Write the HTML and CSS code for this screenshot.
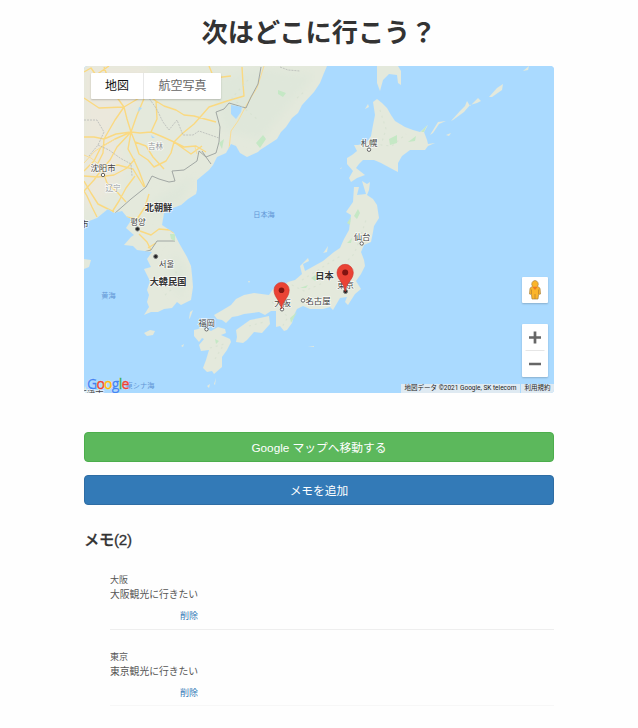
FILE: index.html
```html
<!DOCTYPE html>
<html lang="ja">
<head>
<meta charset="utf-8">
<title>次はどこに行こう？</title>
<link rel="stylesheet" href="styles.css">
</head>
<body>
<main class="container">
<h1 class="title">次はどこに行こう？</h1>
<section class="map">
<svg class="map-canvas" viewBox="84 66.5 470 326" role="img" aria-label="地図">
<defs>
<filter id="soft"><feGaussianBlur stdDeviation=".35"/></filter>
<filter id="terrain" x="0" y="0" width="100%" height="100%"><feGaussianBlur stdDeviation="4"/></filter>
<clipPath id="continent"><path d="M84 66H327L324 73L320 83L314 92L302 105L298 113L292 118L286 127L281 132L277 139L260 150L258 152L247 157L240 153L236 146L231 144L226 153L217 157L213 165L209 170L203 175L197 180V190L196 194L188 199L181 205L170 209L164 213L163 219L162 225L168 229L174 233L179 243L187 257L191 266L192 275L193 287L191 300L181 305L177 302L172 308L164 309L158 312L151 312L144 315L149 307L147 302L149 295L147 290L150 281L144 269L151 267L147 259L152 252L137 250L133 246L124 245L131 237L134 235L126 228L132 219L127 217L122 211L114 213L108 209L97 218L84 223Z"/></clipPath>
</defs>
<rect class="sea" x="84" y="66" width="470" height="327"/>
<g filter="url(#soft)">
<g clip-path="url(#continent)">
<rect class="land" x="84" y="66" width="246" height="252"/>
<g filter="url(#terrain)"><path class="plain" d="M84 66H150L140 100L110 128L126 163L115 188L84 213Z"/><path class="hill" d="M210 80L260 68L315 75L260 140L223 130ZM151 202L195 174L183 201L156 216ZM172 253L187 268L182 300L170 282Z"/></g>
<path class="road" d="M174 142L183 133L194 124L202 115L209 107L227 101L244 96L243 84L242 67M131 132L127 119L124 107L113 92L104 67M131 132L137 115L146 94L156 101L164 106L176 110L184 115L194 116L205 119L216 122M131 132L140 133L151 132L163 137L174 142L184 147L196 146L206 152M151 132L157 119L156 101M174 142L171 153L166 161L154 167L148 160L139 154L135 142L131 132M84 171L94 161L101 147L115 139L131 132M84 137L94 137L104 139L116 134L131 132M124 107L115 120L104 139L103 153L98 163M84 98L99 108L124 107L146 94M84 191L94 180L102 169L110 160L117 147L131 132M102 167L118 165L133 169L144 187M102 169L107 183L118 193L126 202M84 176L98 177L114 175L127 168L135 159M84 181L91 193L98 204L114 212M131 132L128 149L134 160L139 171L145 187M97 217L92 207L87 196L84 191M112 212L119 201L126 188L135 176M135 142L146 146L153 157L164 169M174 142L191 154L202 146M84 72L91 68L96 75L109 66M209 66L214 78L231 76M119 212L126 217L137 219L145 207L149 194M140 231L151 235L159 229L170 230L174 233M139 234L147 242L151 250M156 243L148 248"/>
<path class="minor-road" d="M264 66L257 88L247 104L238 121L231 131L229 149M197 154L195 147M84 163L95 151L115 139M102 167L91 158L84 155"/>
<path class="border" d="M261 67L258 84L251 97L246 108L229 103L224 109L216 112L220 127L219 142L216 153L206 157L199 151L197 161L184 170L172 171L175 181L169 182L159 179L152 176L146 187L131 199L114 214M202 151L206 157L211 164M175 241H157L151 250L136 254"/>
<path class="province" d="M84 120L97 120L104 132L98 145L89 156M146 94L156 108L163 122L169 130L177 120L183 135L193 135L199 131L219 138M98 145L109 150L120 158L131 164L132 176M280 67L288 70L300 71"/>
<path class="park" d="M278 90L286 93L283 97L278 94ZM256 143L263 135L266 139L260 148ZM170 234L175 234V241L171 239ZM219 143L224 139L222 149Z"/>
<path class="sea" d="M231 105L242 107L241 112L236 119L231 114ZM138 112L142 108L139 107ZM151 135L155 138L152 138Z"/>
</g>
<path class="land" d="M377 99L382 103L387 108L391 115L395 121L405 127L413 130L420 132L428 125L424 132L427 140L428 144L435 143L428 146L425 150L410 150L402 156L398 163V172L394 170L381 163L374 160L363 160L359 164L356 168L365 175L357 178L351 182L349 178L353 171L347 164V158L352 155L357 151L354 145L358 145L366 143L371 136L373 125L375 115L373 102Z"/>
<path class="land" d="M362 181L367 184L370 182L369 190L367 195L373 199L377 205L379 218L374 226L373 232L371 242L364 245L361 252L364 260L365 266L361 274L356 281L361 289L355 294L348 305L345 302L347 297L340 298L333 310L330 307L323 309L310 309L303 306L297 309L294 315L292 323L287 330L284 331L280 326L276 327V317L276 311L271 311L265 315L259 312L244 314L238 316L232 317L226 323L222 320L217 319L214 315L221 311L231 305L236 299L244 295L254 293L269 295L273 289L281 287L288 282L295 280L302 274L300 266L308 258L309 261L303 264L305 271L314 266L323 261L334 252L340 248L344 239L349 230L351 215L346 212L353 202L354 187L359 187L357 195L366 194Z"/>
<path class="land" d="M194 330L198 329L202 327L211 331L218 327L225 329L226 333L221 335L230 339L231 342L227 350L222 357L222 367L214 374L212 371L207 372L203 368L206 360L209 350L201 351L199 345L204 339L202 338L199 342L194 336ZM236 330L243 325L250 320L260 318L269 316L270 324L262 333L254 332L247 340L243 343L236 342L237 337Z"/>
<path class="land" d="M377 66H398L401 71V85L398 83L397 75L389 74L383 80L380 91L377 83ZM430 135L438 122L446 121L439 124L433 133ZM451 121L460 111L465 106L467 101L470 106L478 98L481 101L477 103L470 105L464 112L453 120ZM489 97L497 88L503 84L502 90L492 97ZM446 135L451 133L449 136ZM523 71L529 66L528 70ZM144 333L150 330L155 331L153 335L147 336ZM189 319L190 312L193 310L190 318ZM181 346L184 344L183 347ZM207 386L210 384L209 388ZM214 384L216 378L215 385ZM324 252L328 246L327 252L323 253ZM84 259L91 260L89 267L84 269ZM365 109L368 104L369 107ZM340 169L342 167L341 169ZM248 281L250 281L249 283ZM84 391L85 386L88 393ZM308 347L314 346L314 347Z"/>
<path class="park" d="M389 139L397 135V143L390 145ZM408 142L416 136L415 141ZM347 243L352 238L351 243ZM354 216L358 209L360 213L357 219ZM311 278L320 272L322 276L315 281ZM300 288L308 285L306 288ZM290 318L297 312L291 323ZM215 339L219 341L216 344ZM347 223L351 217L350 225ZM421 132L427 125L424 132Z"/>
<path class="relief" d="M348 260L354 254L358 244L366 220M302 280L326 265L342 255M281 290L292 285L304 291L323 283M272 302L288 317L282 327M249 326L264 322M210 348L224 344L215 359M380 110L386 129L381 145L392 146L406 134M297 98L305 91M248 80L232 98L257 119M165 295L181 281L173 267"/>
</g>
<g class="places">
<text x="155.5" y="149" class="province-name">吉林</text><text x="113" y="191" class="province-name">辽宁</text>
<text x="103" y="171" class="city">沈阳市</text><circle class="dot" cx="103" cy="175" r="1.7"/>
<text x="84.5" y="227" class="city">市</text>
<text x="158.5" y="210.5" class="country">北朝鮮</text><text x="138" y="224.5" class="city">평양</text><circle class="capital" cx="137.5" cy="229" r="2"/>
<text x="166.5" y="266.5" class="city">서울</text><circle class="capital" cx="155.7" cy="256.5" r="2"/>
<text x="168" y="285" class="country">大韓民国</text>
<text x="264" y="217" class="water">日本海</text><text x="108.5" y="297.5" class="water">黄海</text><text x="140" y="387.7" class="water">東シナ海</text>
<text x="369" y="145.5" class="city">札幌</text><circle class="dot" cx="369" cy="149.7" r="1.7"/>
<text x="362" y="240" class="city">仙台</text><circle class="dot" cx="361.7" cy="243.5" r="1.7"/>
<text x="206.5" y="325.5" class="city">福岡</text><circle class="dot" cx="206.5" cy="329.3" r="1.7"/>
<text x="318" y="304" class="city">名古屋</text><circle class="dot" cx="303" cy="300.5" r="1.7"/>
<text x="324.5" y="279" class="country">日本</text>
<text x="345.5" y="287.5" class="city">東京</text><circle class="capital" cx="345.5" cy="291.5" r="2"/>
<text x="282.5" y="305.7" class="city">大阪</text><circle class="dot" cx="282" cy="309.3" r="1.7"/>
<text x="91" y="397" class="city">天津市</text>
</g>
<g class="pins"><path d="M281.5 309C280.5 300 274 298 274 290A7.6 7.6 0 0 1 289.2 290C289.2 298 282.5 300 281.5 309Z"/><circle cx="281.5" cy="290.3" r="2.8"/><path d="M345.2 291.5C344 282 337 280 337 272.5A8.1 8.1 0 0 1 353.3 272.5C353.3 280 346.3 282 345.2 291.5Z"/><circle cx="345.2" cy="272.5" r="3"/></g>
</svg>
<div class="map-types"><span class="active">地図</span><span>航空写真</span></div>
<div class="controls">
<div class="person"><svg viewBox="0 0 14 20"><path d="M7 .5A3.6 3.6 0 0 1 9.5 6.3L12 8.2L12.5 14L10.6 14.4L10 19H4L3.4 14.4L1.5 14L2 8.2L4.5 6.3A3.6 3.6 0 0 1 7 .5Z" fill="#fbb52a" stroke="#a98443" stroke-width=".7"/><path d="M4.3 6.7H9.7L7 10Z" fill="#ed7b23"/><path d="M7 14V19M3.5 9.5V14M10.5 9.5V14" stroke="#b7802e" stroke-width=".7"/></svg></div>
<div class="zoom"><svg viewBox="0 0 26 53"><path d="M7 13.5H19M13 7.5V19.5M7 40H19" stroke="#666" stroke-width="2.7"/><path d="M3.5 26.5H22.5" stroke="#e6e6e6"/></svg></div>
</div>
<div class="logo"><span class="b">G</span><span class="r">o</span><span class="y">o</span><span class="b">g</span><span class="g">l</span><span class="r">e</span></div>
<div class="attribution"><span>地図データ ©2021 Google, SK telecom</span><span>利用規約</span></div>
</section>
<button class="button success">Google マップへ移動する</button>
<button class="button primary">メモを追加</button>
<h2 class="memo-heading">メモ(2)</h2>
<ul class="memos">
<li class="memo"><div class="place">大阪</div><div class="description">大阪観光に行きたい</div><a class="delete">削除</a></li>
<li class="memo"><div class="place">東京</div><div class="description">東京観光に行きたい</div><a class="delete">削除</a></li>
</ul>
</main>
</body>
</html>
```
FILE: styles.css
```css
* { box-sizing: border-box; }
body { margin: 0; background: #fefefe; color: #333; font-family: "Liberation Sans", "Noto Sans CJK JP", sans-serif; }
.container { width: 470px; margin-left: 84px; }
.title { margin: 0; height: 66px; padding-top: 13px; font-size: 26.2px; line-height: 40px; font-weight: 700; text-align: center; }
.map { position: relative; height: 327px; border-radius: 4px; overflow: hidden; background: #aadaff; }
.map-canvas { display: block; width: 470px; height: 327px; }
.sea { fill: #aadaff; }
.land { fill: #e4e9dc; }
.plain { fill: #ebe8dc; }
.hill { fill: #dfe7da; }
.park { fill: #c5e8c5; }
.road, .minor-road, .border, .province, .relief { fill: none; stroke-linejoin: round; }
.road { stroke: #fad981; stroke-width: 1.4; }
.minor-road { stroke: #f8dc96; stroke-width: 1; }
.border { stroke: #9a9f9d; stroke-width: .9; }
.province { stroke: #b8bab7; stroke-width: .8; stroke-dasharray: 2 1; }
.relief { stroke: #d4dfcf; stroke-width: 1.1; stroke-dasharray: 2 4; opacity: .7; }
.places text { text-anchor: middle; font-family: Roboto, "Noto Sans CJK JP", "Noto Sans CJK KR", sans-serif; paint-order: stroke; stroke: #fffc; stroke-width: 1.4px; }
.places .city { font-size: 8.4px; fill: #444; }
.places .country { font-size: 9.2px; font-weight: 700; fill: #333; }
.places .province-name { font-size: 7.5px; fill: #92979b; }
.places .water { font-size: 7.2px; fill: #6296d6; stroke: none; }
.dot { fill: #fff; stroke: #555; stroke-width: .9; }
.capital { fill: #222; stroke: #777; stroke-width: 1; }
.pins path { fill: #ea4335; stroke: #cf3028; stroke-width: .6; }
.pins circle { fill: #811411; }
.map-types { position: absolute; left: 7px; top: 7px; display: flex; height: 26px; background: #fff; box-shadow: 0 1px 2px #0003; font-size: 12px; line-height: 26px; color: #666; text-align: center; border-radius: 1px; }
.map-types span { width: 77px; }
.map-types .active { width: 53px; color: #111; border-right: 1px solid #e8e8e8; }
.controls { position: absolute; right: 6px; top: 211px; display: flex; flex-direction: column; gap: 21px; }
.person, .zoom { width: 26px; background: #fff; border-radius: 1px; box-shadow: 0 1px 2px #0003; }
.person { height: 26px; display: flex; align-items: center; justify-content: center; }
.person svg { width: 14px; height: 20px; }
.zoom { height: 53px; }
.zoom svg { display: block; width: 26px; height: 53px; }
.logo { position: absolute; left: 3px; bottom: 1px; font: 500 14px/17px "Open Sans", sans-serif; letter-spacing: -.75px; -webkit-text-stroke: .4px currentColor; text-shadow: 0 0 1px #fff, 0 0 1px #fff; }
.b { color: #4285f4; } .r { color: #ea4335; } .y { color: #fbbc05; } .g { color: #34a853; }
.attribution { position: absolute; right: 0; bottom: 0; height: 9px; display: flex; gap: 1px; font: 6.5px/9px Roboto, "Noto Sans CJK JP", sans-serif; color: #222; white-space: nowrap; }
.attribution span { width: 33px; text-align: center; background: #dfeaf2; }
.attribution span:first-child { width: 119px; }
.button { display: block; width: 100%; height: 30px; margin: 0 0 13px; padding: 2px 0 0; border: 1px solid; border-radius: 4px; font: 11.75px/26px "Liberation Sans", "Noto Sans CJK JP", sans-serif; color: #fff; }
.success { margin-top: 39px; background: #5cb85c; border-color: #4cae4c; }
.primary { background: #337ab7; border-color: #2e6da4; }
.memo-heading { margin: 23px 0 0; font-size: 15.2px; font-weight: 500; line-height: 23px; letter-spacing: -.2px; -webkit-text-stroke: .3px; }
.memos { list-style: none; margin: 21px 0 0 26px; padding: 0; }
.memo { height: 58px; margin-bottom: 18.5px; padding-top: 1px; border-bottom: 1px solid #eee; color: #555; }
.memo:last-child { height: 57.5px; border-color: #f7f7f7; }
.place { font-size: 9px; line-height: 14px; }
.description { font-size: 9.8px; line-height: 16px; }
.delete { display: block; width: 88px; padding-top: 6px; text-align: right; font-size: 9px; line-height: 14px; color: #337ab7; }
```
